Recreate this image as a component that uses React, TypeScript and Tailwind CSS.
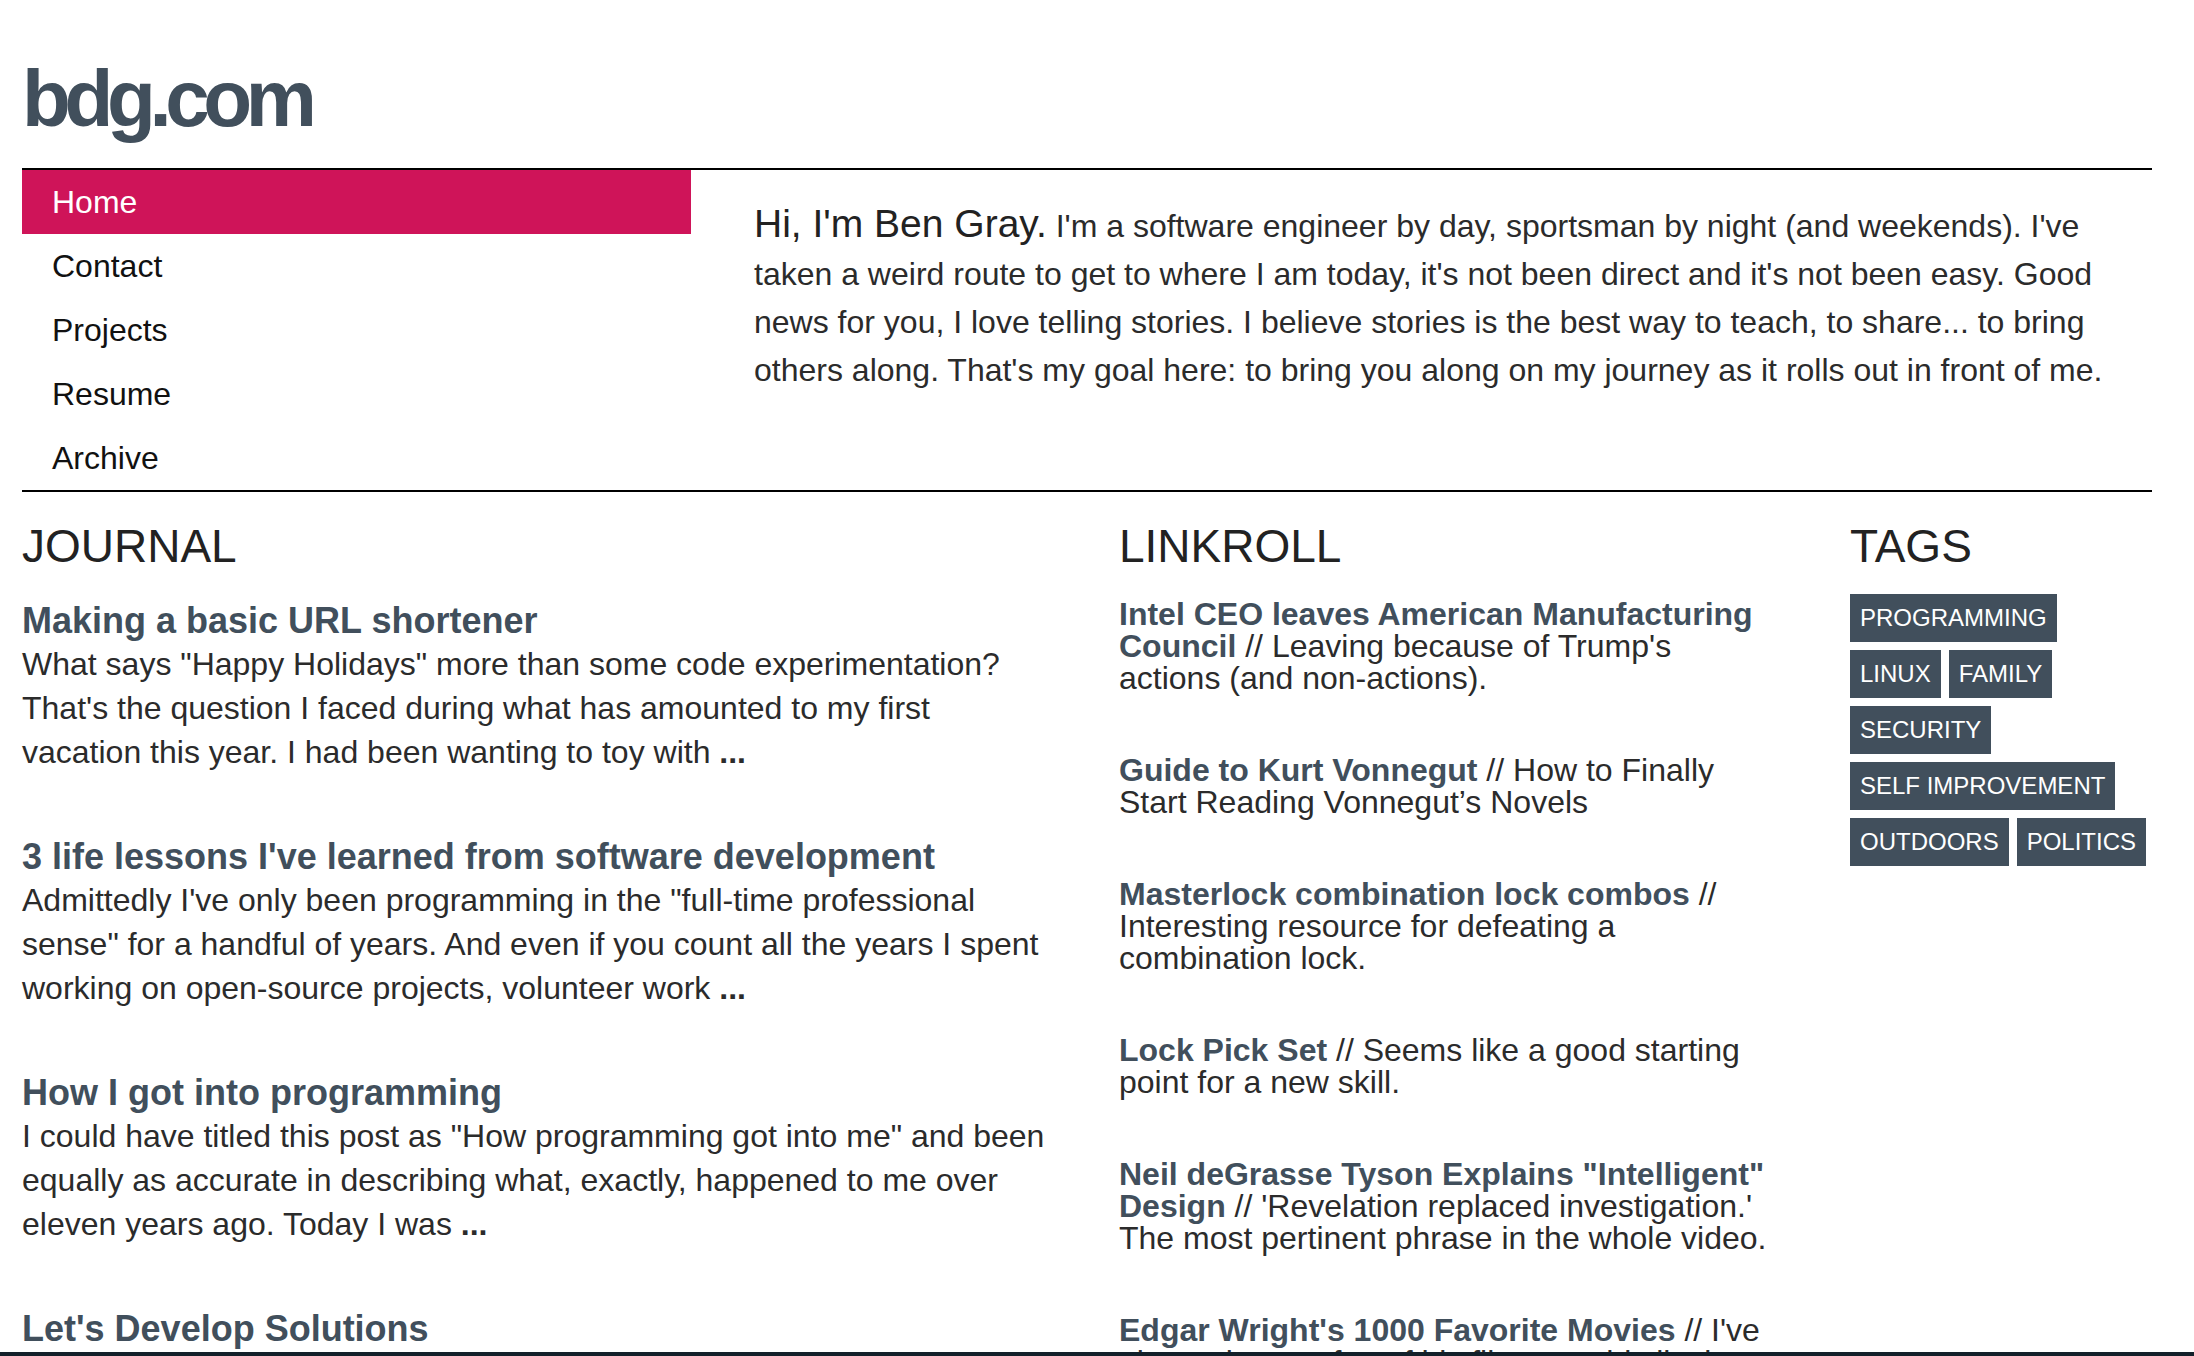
const navItems = ["Home", "Contact", "Projects", "Resume", "Archive"];

const posts = [
  {
    title: "Making a basic URL shortener",
    excerpt:
      "What says \"Happy Holidays\" more than some code experimentation? That's the question I faced during what has amounted to my first vacation this year. I had been wanting to toy with",
  },
  {
    title: "3 life lessons I've learned from software development",
    excerpt:
      "Admittedly I've only been programming in the \"full-time professional sense\" for a handful of years. And even if you count all the years I spent working on open-source projects, volunteer work",
  },
  {
    title: "How I got into programming",
    excerpt:
      "I could have titled this post as \"How programming got into me\" and been equally as accurate in describing what, exactly, happened to me over eleven years ago. Today I was",
  },
  {
    title: "Let's Develop Solutions",
    excerpt:
      "Every problem is an opportunity to build something better, and the best solutions come from people who care about the details. Let's",
  },
];

const links = [
  { title: "Intel CEO leaves American Manufacturing Council", note: "Leaving because of Trump's actions (and non-actions)." },
  { title: "Guide to Kurt Vonnegut", note: "How to Finally Start Reading Vonnegut’s Novels" },
  { title: "Masterlock combination lock combos", note: "Interesting resource for defeating a combination lock." },
  { title: "Lock Pick Set", note: "Seems like a good starting point for a new skill." },
  { title: "Neil deGrasse Tyson Explains \"Intelligent\" Design", note: "'Revelation replaced investigation.' The most pertinent phrase in the whole video." },
  { title: "Edgar Wright's 1000 Favorite Movies", note: "I've always been a fan of his films, so this list is a treasure." },
];

const tags = ["PROGRAMMING", "LINUX", "FAMILY", "SECURITY", "SELF IMPROVEMENT", "OUTDOORS", "POLITICS"];

export default function App() {
  return (
    <div className="h-screen flex flex-col overflow-hidden bg-white font-['Liberation_Sans',Arial,sans-serif] text-[#2b2b2b]">
      <div className="flex-1 min-h-0 overflow-hidden">
        <div className="ml-[22px] w-[2130px]">
          {/* header */}
          <header className="pt-[59px] pb-[29px]">
            <h1 className="text-[80px] leading-[80px] font-bold tracking-[-6.4px] text-[#414f5c]">bdg.com</h1>
          </header>

          <div className="border-t-2 border-black grid grid-cols-[669px_1fr] gap-[63px]">
            <nav className="flex flex-col">
              {navItems.map((item, i) => (
                <a
                  key={item}
                  href="#"
                  className={
                    i === 0
                      ? "h-16 pl-[30px] text-[32px] leading-[64px] bg-[#cf1459] text-white"
                      : "h-16 pl-[30px] text-[32px] leading-[64px] text-[#111]"
                  }
                >
                  {item}
                </a>
              ))}
            </nav>
            <p className="pt-[30px] text-[32px] leading-[48px] text-[#2b2b2b]">
              <span className="text-[39px] text-[#222]">Hi, I'm Ben Gray.</span> I'm a software engineer by day, sportsman
              by night (and weekends). I've taken a weird route to get to where I am today, it's not been direct and it's
              not been easy. Good news for you, I love telling stories. I believe stories is the best way to teach, to
              share... to bring others along. That's my goal here: to bring you along on my journey as it rolls out in
              front of me.
            </p>
          </div>

          <div className="border-t-2 border-black grid grid-cols-[1097px_731px_302px] pt-[31px]">
            {/* journal */}
            <section className="pr-[69px]">
              <h2 className="text-[46px] leading-[46px] text-[#222] mb-[31px]">JOURNAL</h2>
              {posts.map((p) => (
                <article key={p.title} className="mb-[62px]">
                  <h3 className="text-[36px] leading-[42px] font-bold text-[#414f5c]">{p.title}</h3>
                  <p className="text-[32px] leading-[44px]">
                    {p.excerpt} <span className="font-bold">...</span>
                  </p>
                </article>
              ))}
            </section>

            {/* linkroll */}
            <section className="pr-[71px]">
              <h2 className="text-[46px] leading-[46px] text-[#222] mb-[29px]">LINKROLL</h2>
              {links.map((l) => (
                <p key={l.title} className="text-[32px] leading-[32px] mb-[60px]">
                  <a href="#" className="font-bold text-[#414f5c]">
                    {l.title}
                  </a>{" "}
                  // {l.note}
                </p>
              ))}
            </section>

            {/* tags */}
            <section>
              <h2 className="text-[46px] leading-[46px] text-[#222] mb-[25px]">TAGS</h2>
              <div className="flex flex-wrap gap-2">
                {tags.map((t) => (
                  <a key={t} href="#" className="bg-[#414f5c] text-white text-[24px] leading-[24px] py-3 px-[10px]">
                    {t}
                  </a>
                ))}
              </div>
            </section>
          </div>
        </div>
      </div>
      <div className="h-[4px] bg-[#13202a]" />
    </div>
  );
}
